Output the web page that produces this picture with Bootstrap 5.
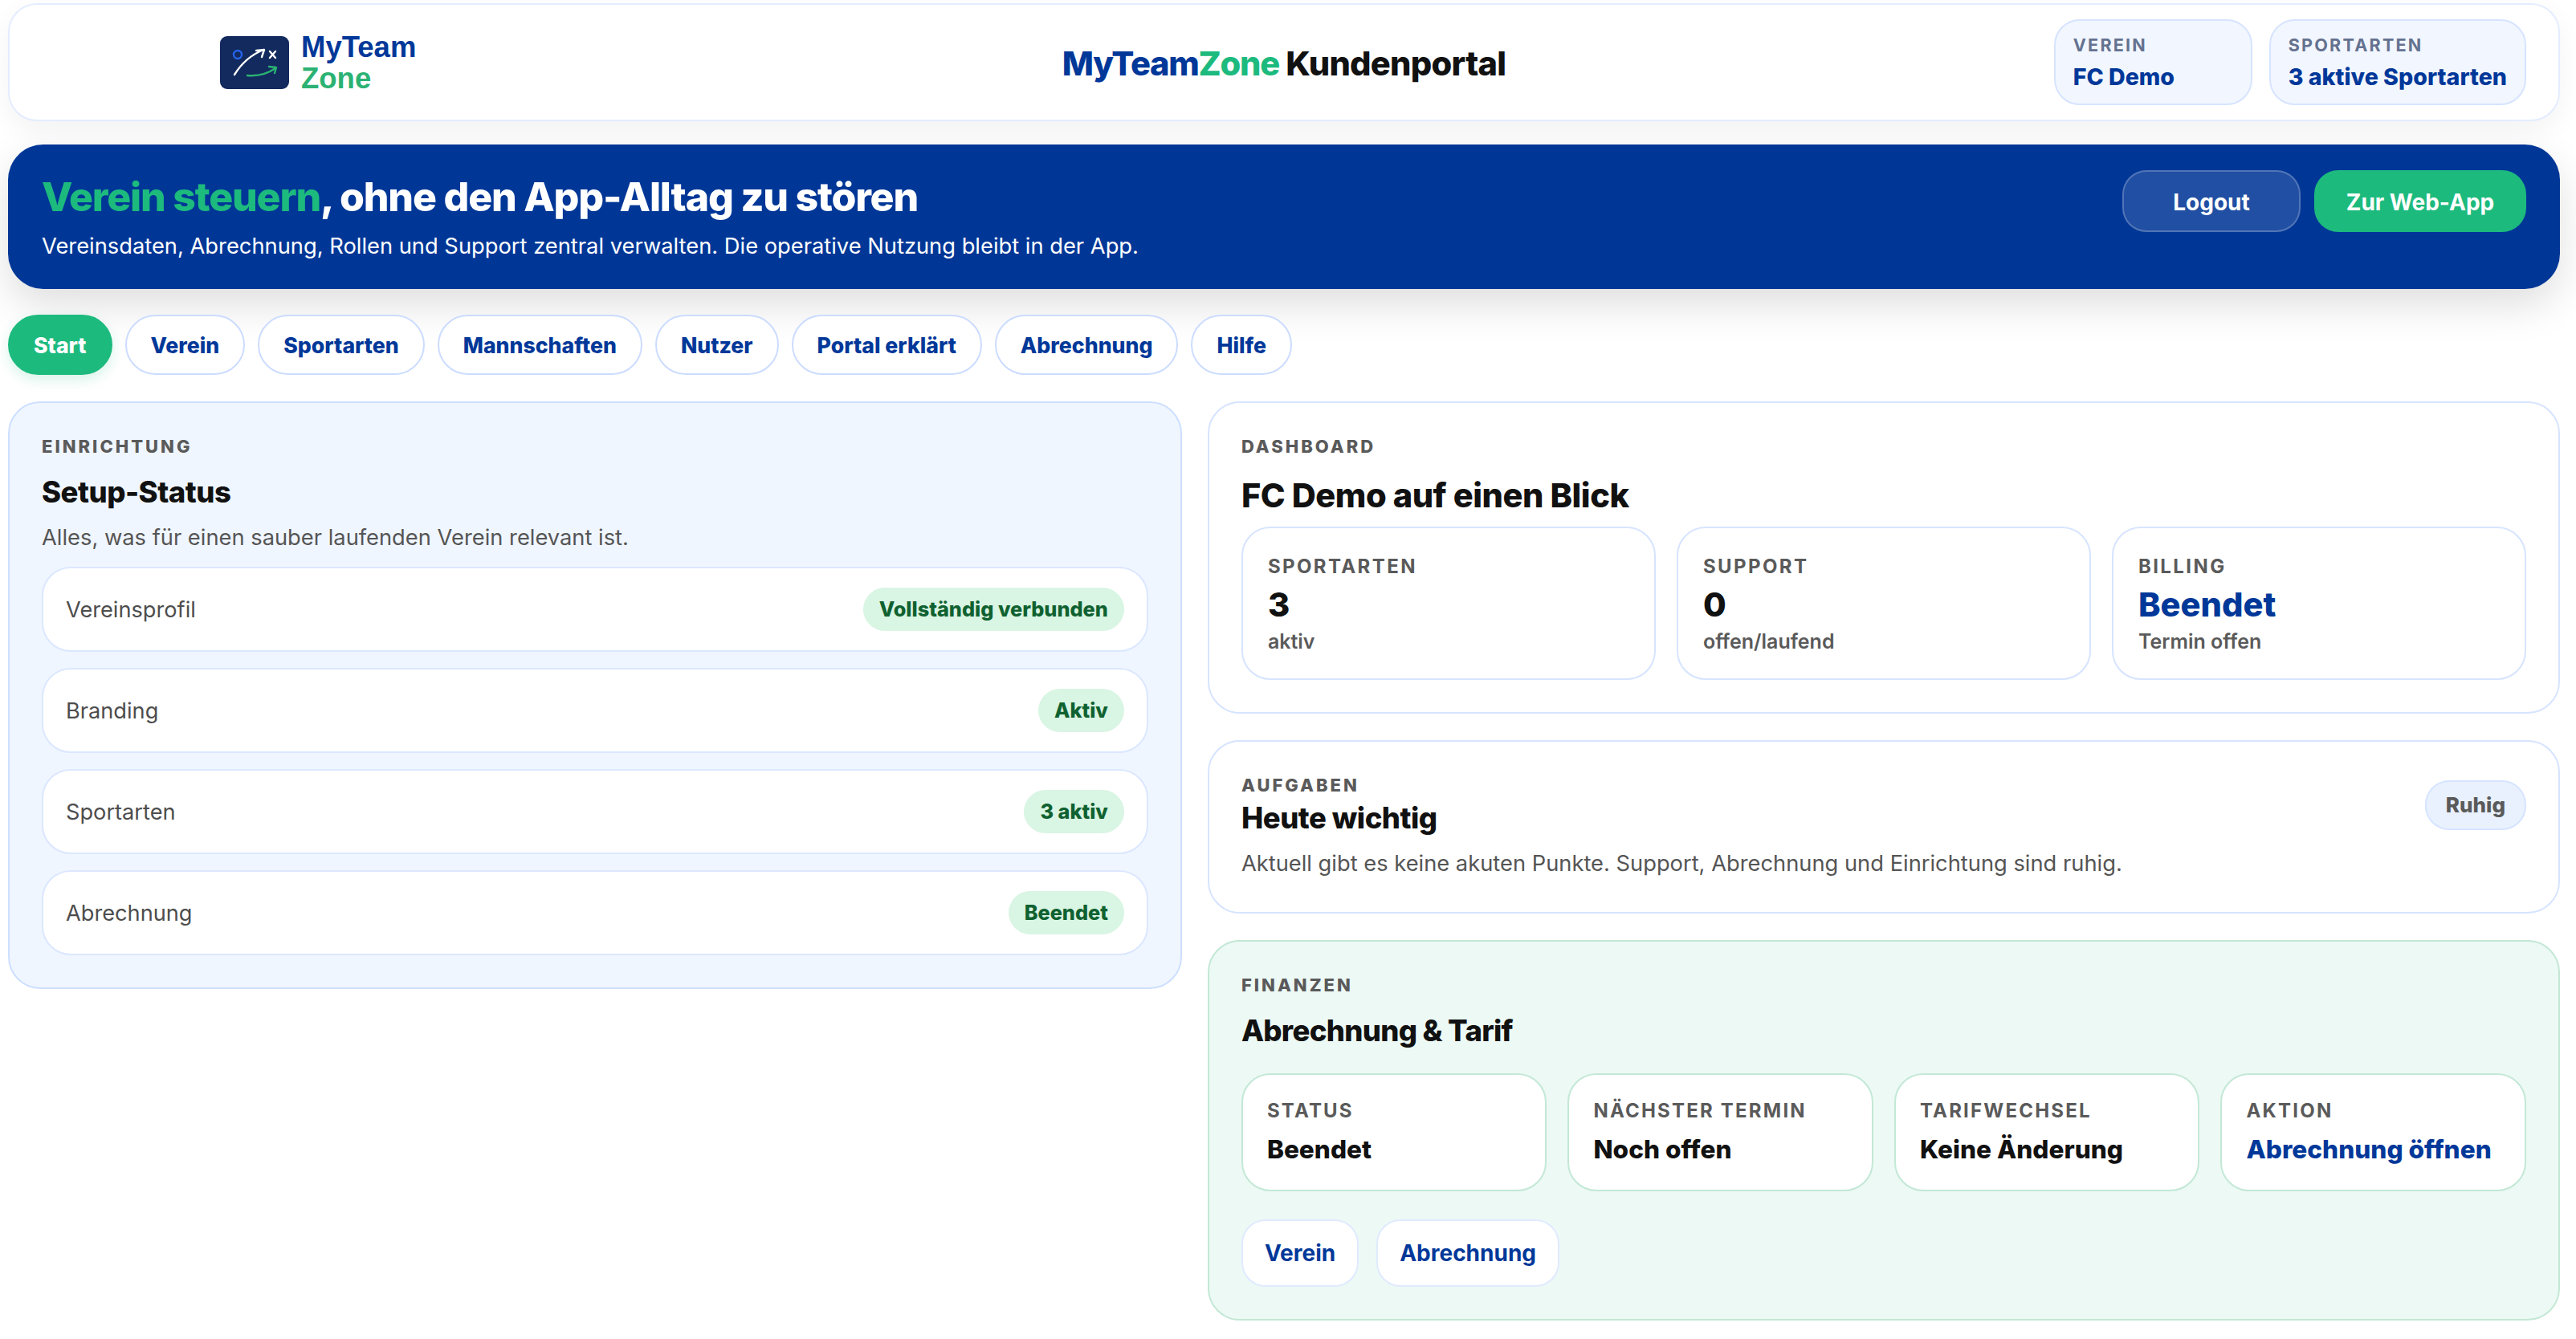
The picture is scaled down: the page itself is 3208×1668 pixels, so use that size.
<!DOCTYPE html>
<html lang="de">
<head>
    <meta charset="UTF-8">
    <title>MyTeamZone Kundenportal</title>
    <link href="https://cdn.jsdelivr.net/npm/bootstrap@5.3.3/dist/css/bootstrap.min.css" rel="stylesheet">
    <style>
        body {
            background: #fff;
            color: #111;
            font-family: Inter, "Liberation Sans", sans-serif;
            font-size: 27.3px;
            line-height: 1.4;
        }

        .page-wrap {
            padding: 4px 20px 20px 10px;
        }

        .topbar {
            display: grid;
            grid-template-columns: 1fr auto 1fr;
            height: 147px;
            padding: 0 40px;
            background: #fff;
            border: 2px solid #e4edff;
            border-radius: 36px;
            box-shadow: 0 12px 32px rgba(0, 0, 0, 0.05);
        }

        .brand {
            padding-left: 222px;
            gap: 15px;
        }

        .brand-mark {
            width: 86px;
            height: 66px;
            flex: none;
        }

        .brand-name {
            font-family: "Liberation Sans", Arial, sans-serif;
            font-size: 36.5px;
            font-weight: 700;
            line-height: 39px;
            color: #003899;
        }

        .brand-name span {
            display: block;
            color: #2bb273;
        }

        .portal-title {
            padding-top: 4px;
            font-size: 41.6px;
            font-weight: 800;
            letter-spacing: -0.75px;
            color: #111;
        }

        .portal-title b {
            color: #003899;
            font-weight: 800;
            letter-spacing: -1.27px;
        }

        .portal-title i {
            color: #1dba7e;
            font-style: normal;
            letter-spacing: -1.27px;
        }

        .chip-row {
            gap: 21px;
        }

        .top-chip {
            min-width: 247px;
            height: 107px;
            padding: 0 22px;
            background: #f2f6ff;
            border: 2px solid #d6e4ff;
            border-radius: 32px;
        }

        .top-chip small {
            display: block;
            font-size: 21.6px;
            font-weight: 700;
            letter-spacing: 2.2px;
            line-height: 30px;
            color: #64728f;
            text-transform: uppercase;
        }

        .top-chip strong {
            display: block;
            font-size: 28.6px;
            font-weight: 800;
            line-height: 38px;
            margin-top: 6px;
            color: #003899;
        }

        .hero {
            height: 180px;
            margin-top: 29px;
            padding: 34px 42px 0;
            background: #003797;
            border-radius: 44px;
            box-shadow: 0 20px 50px rgba(0, 0, 0, 0.13);
            color: #fff;
        }

        .hero h1 {
            margin: 0;
            font-size: 50px;
            font-weight: 800;
            line-height: 62px;
            letter-spacing: -1.2px;
        }

        .hero h1 span {
            color: #1dba7e;
        }

        .hero p {
            margin: 12px 0 0;
            font-size: 27.3px;
            line-height: 38px;
        }

        .hero-actions {
            gap: 17px;
            margin-top: -2px;
        }

        .hero-btn {
            height: 77px;
            padding: 2px 38px 0;
            border-radius: 30px;
            font-size: 28px;
            font-weight: 700;
            color: #fff;
            --bs-btn-color: #fff;
            --bs-btn-hover-color: #fff;
        }

        .btn-logout {
            width: 222px;
            background: #214fa3;
            border: 2px solid rgba(255, 255, 255, 0.22);
        }

        .btn-webapp {
            width: 264px;
            background: #1dba7e;
            border: 0;
        }

        .tabs {
            margin-top: 32px;
            gap: 16px;
        }

        .tabs .nav-link {
            height: 75px;
            padding: 2px 30px 0;
            display: flex;
            align-items: center;
            background: #fff;
            border: 2px solid #ccdcff;
            border-radius: 38px;
            font-size: 26.66px;
            font-weight: 800;
            color: #003899;
        }

        .tabs .nav-link.active {
            background: #1dba7e;
            border-color: #1dba7e;
            color: #fff;
            box-shadow: 0 6px 16px rgba(29, 186, 126, 0.18);
        }

        .main-grid {
            display: grid;
            grid-template-columns: 1fr 1.152fr;
            gap: 32px;
            margin-top: 33px;
            align-items: start;
        }

        .side-stack {
            gap: 33px;
        }

        .panel {
            padding: 40px;
            background: #fff;
            border: 2px solid #d6e4ff;
            border-radius: 40px;
        }

        .panel-blue {
            background: #f0f6ff;
            border-color: #cddfff;
        }

        .panel-green {
            background: #edf9f5;
            border-color: #c3e8d6;
        }

        .eyebrow {
            margin-top: -1px;
            font-size: 22px;
            font-weight: 800;
            letter-spacing: 3px;
            line-height: 30px;
            color: #5a5a5a;
            text-transform: uppercase;
        }

        .panel h2 {
            margin: 21px 0 0;
            font-size: 36.5px;
            font-weight: 800;
            letter-spacing: -0.5px;
            color: #111;
        }

        .panel h2.dash-title {
            margin: 22px 0 13px;
            font-size: 41.6px;
        }

        .panel h2.task-title {
            margin-top: 5px;
        }

        .panel h2.tariff-title {
            letter-spacing: -0.7px;
        }

        .panel-note {
            margin: 14px 0 0;
            font-size: 27.3px;
            line-height: 40px;
            color: #555;
        }

        .setup-list {
            gap: 20px;
            margin-top: 16px;
        }

        .setup-item {
            height: 106px;
            padding: 0 28px;
            background: #fff;
            border: 2px solid #dbe7ff;
            border-radius: 36px;
            font-size: 27.2px;
            color: #4d4d4d;
        }

        .setup-item > span:first-child {
            padding-top: 2px;
        }

        .setup-badge {
            padding: 0 20px;
            line-height: 54px;
            background: #d9f5e3;
            border-radius: 28px;
            font-size: 25.3px;
            font-weight: 800;
            color: #0f6130;
        }

        .tile-row {
            gap: 26px;
        }

        .stat-tile {
            flex: 1 1 0;
            padding: 32px 31px 28px;
            background: #fff;
            border: 2px solid #d6e4ff;
            border-radius: 36px;
        }

        .stat-tile small {
            display: block;
            margin-bottom: 3px;
            font-size: 24px;
            font-weight: 700;
            letter-spacing: 2.4px;
            line-height: 32px;
            color: #5a5a5a;
            text-transform: uppercase;
        }

        .stat-tile strong {
            display: block;
            font-size: 41.6px;
            font-weight: 800;
            line-height: 56px;
            color: #111;
        }

        .stat-tile span {
            display: block;
            font-size: 25px;
            font-weight: 600;
            line-height: 36px;
            color: #5a5a5a;
        }

        .text-brand {
            color: #003899 !important;
        }

        .ruhig {
            margin-top: 8px;
            padding: 0 24px;
            line-height: 58px;
            background: #e9f1ff;
            border: 2px solid #d6e4ff;
            border-radius: 30px;
            font-size: 26px;
            font-weight: 800;
            color: #5a5a5a;
        }

        .tariff-row {
            margin-top: 30px;
        }

        .tariff-tile {
            flex: 1 1 0;
            height: 147px;
            padding: 29px 30px 0;
            background: #fff;
            border: 2px solid #c3e8d6;
            border-radius: 36px;
        }

        .tariff-tile small {
            display: block;
            font-size: 24px;
            font-weight: 700;
            letter-spacing: 2.2px;
            line-height: 32px;
            color: #5a5a5a;
            text-transform: uppercase;
        }

        .tariff-tile strong {
            display: block;
            margin-top: 10px;
            font-size: 31.6px;
            font-weight: 800;
            line-height: 44px;
            color: #111;
        }

        .soft-row {
            gap: 22px;
            margin-top: 35px;
        }

        .soft-btn {
            height: 84px;
            padding: 2px 27px 0;
            display: flex;
            align-items: center;
            background: #fff;
            border: 2px solid #e0eaff;
            border-radius: 30px;
            font-size: 28px;
            font-weight: 700;
            color: #003899;
        }
    </style>
</head>
<body>

<div class="page-wrap">
    <header class="topbar align-items-center">
        <div class="brand d-flex align-items-center">
            <svg class="brand-mark" viewBox="0 0 86 66" fill="none" stroke-linecap="round" stroke-linejoin="round">
                <rect width="86" height="66" rx="9" fill="#132a5e"/>
                <circle cx="22" cy="23" r="5" stroke="#2563eb" stroke-width="2.4"/>
                <path d="M18 48C26 35 37 24 54 17" stroke="#fff" stroke-width="2.4"/>
                <path d="M45 18l10-1-3 9" stroke="#fff" stroke-width="2.4"/>
                <path d="M62 19l7 8M69 19l-7 8" stroke="#fff" stroke-width="2.4"/>
                <path d="M34 49C46 50 59 47 69 40" stroke="#2bb273" stroke-width="2.4"/>
                <path d="M61 38l9 1-2 7" stroke="#2bb273" stroke-width="2.4"/>
            </svg>
            <div class="brand-name">MyTeam<span>Zone</span></div>
        </div>
        <div class="portal-title"><b>MyTeam</b><i>Zone</i> Kundenportal</div>
        <div class="chip-row d-flex justify-content-end">
            <div class="top-chip d-flex flex-column justify-content-center"><small>Verein</small><strong>FC Demo</strong></div>
            <div class="top-chip d-flex flex-column justify-content-center"><small>Sportarten</small><strong>3 aktive Sportarten</strong></div>
        </div>
    </header>

    <section class="hero d-flex justify-content-between align-items-start">
        <div>
            <h1><span>Verein steuern</span>, ohne den App-Alltag zu stören</h1>
            <p>Vereinsdaten, Abrechnung, Rollen und Support zentral verwalten. Die operative Nutzung bleibt in der App.</p>
        </div>
        <div class="hero-actions d-flex">
            <a href="#" class="btn hero-btn btn-logout d-flex align-items-center justify-content-center">Logout</a>
            <a href="#" class="btn hero-btn btn-webapp d-flex align-items-center justify-content-center">Zur Web-App</a>
        </div>
    </section>

    <nav class="nav tabs">
        <a class="nav-link active" href="#">Start</a>
        <a class="nav-link" href="#">Verein</a>
        <a class="nav-link" href="#">Sportarten</a>
        <a class="nav-link" href="#">Mannschaften</a>
        <a class="nav-link" href="#">Nutzer</a>
        <a class="nav-link" href="#">Portal erklärt</a>
        <a class="nav-link" href="#">Abrechnung</a>
        <a class="nav-link" href="#">Hilfe</a>
    </nav>

    <div class="main-grid">
        <section class="panel panel-blue">
            <div class="eyebrow">Einrichtung</div>
            <h2>Setup-Status</h2>
            <p class="panel-note">Alles, was für einen sauber laufenden Verein relevant ist.</p>
            <div class="setup-list d-flex flex-column">
                <div class="setup-item d-flex justify-content-between align-items-center"><span>Vereinsprofil</span><span class="setup-badge">Vollständig verbunden</span></div>
                <div class="setup-item d-flex justify-content-between align-items-center"><span>Branding</span><span class="setup-badge">Aktiv</span></div>
                <div class="setup-item d-flex justify-content-between align-items-center"><span>Sportarten</span><span class="setup-badge">3 aktiv</span></div>
                <div class="setup-item d-flex justify-content-between align-items-center"><span>Abrechnung</span><span class="setup-badge">Beendet</span></div>
            </div>
        </section>

        <div class="side-stack d-flex flex-column">
            <section class="panel">
                <div class="eyebrow">Dashboard</div>
                <h2 class="dash-title">FC Demo auf einen Blick</h2>
                <div class="tile-row d-flex">
                    <div class="stat-tile"><small>Sportarten</small><strong>3</strong><span>aktiv</span></div>
                    <div class="stat-tile"><small>Support</small><strong>0</strong><span>offen/laufend</span></div>
                    <div class="stat-tile"><small>Billing</small><strong class="text-brand">Beendet</strong><span>Termin offen</span></div>
                </div>
            </section>

            <section class="panel">
                <div class="d-flex justify-content-between align-items-start">
                    <div>
                        <div class="eyebrow">Aufgaben</div>
                        <h2 class="task-title">Heute wichtig</h2>
                    </div>
                    <span class="ruhig">Ruhig</span>
                </div>
                <p class="panel-note">Aktuell gibt es keine akuten Punkte. Support, Abrechnung und Einrichtung sind ruhig.</p>
            </section>

            <section class="panel panel-green">
                <div class="eyebrow">Finanzen</div>
                <h2 class="tariff-title">Abrechnung &amp; Tarif</h2>
                <div class="tile-row tariff-row d-flex">
                    <div class="tariff-tile"><small>Status</small><strong>Beendet</strong></div>
                    <div class="tariff-tile"><small>Nächster Termin</small><strong>Noch offen</strong></div>
                    <div class="tariff-tile"><small>Tarifwechsel</small><strong>Keine Änderung</strong></div>
                    <div class="tariff-tile"><small>Aktion</small><strong class="text-brand">Abrechnung öffnen</strong></div>
                </div>
                <div class="soft-row d-flex">
                    <a class="soft-btn text-decoration-none" href="#">Verein</a>
                    <a class="soft-btn text-decoration-none" href="#">Abrechnung</a>
                </div>
            </section>
        </div>
    </div>
</div>

<script src="https://cdn.jsdelivr.net/npm/bootstrap@5.3.3/dist/js/bootstrap.bundle.min.js"></script>
</body>
</html>
